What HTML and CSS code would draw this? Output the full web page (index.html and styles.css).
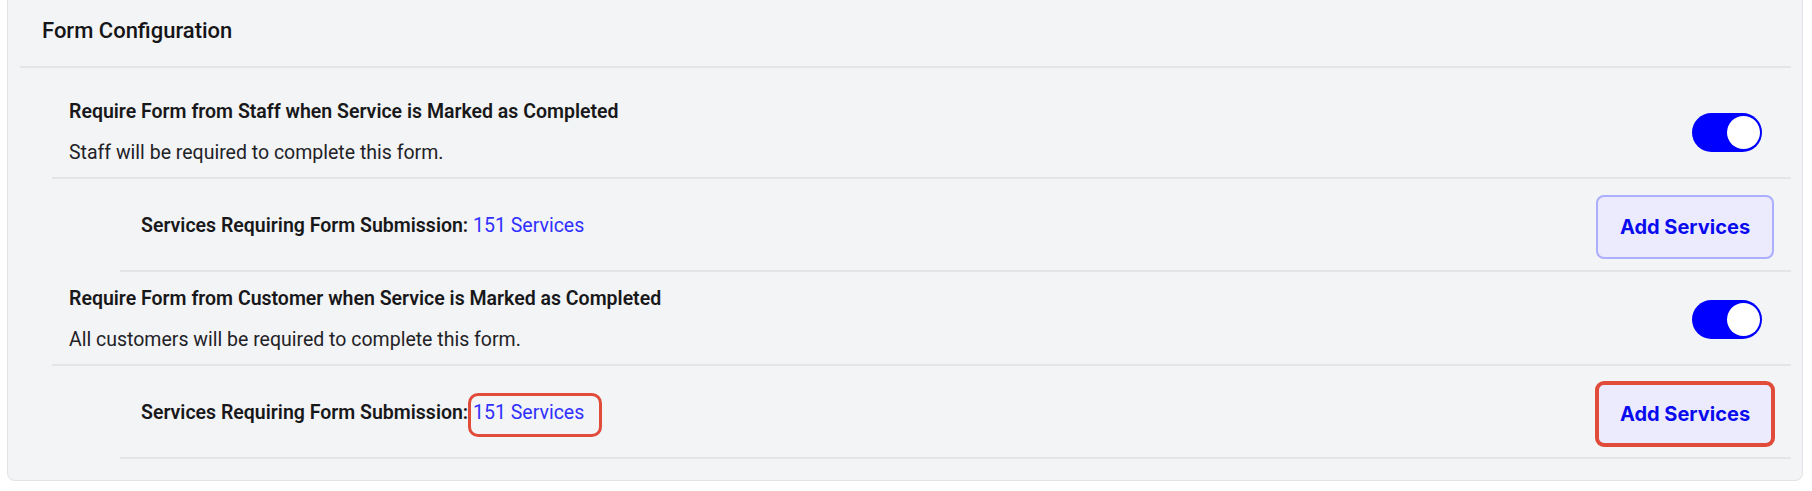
FILE: index.html
```html
<!DOCTYPE html>
<html lang="en">
<head>
<meta charset="utf-8">
<title>Form Configuration</title>
<link rel="stylesheet" href="styles.css">
</head>
<body>
<section class="card">
  <div class="card-header">Form Configuration</div>

  <div class="setting first">
    <div class="toggle-row">
      <div class="toggle-text">
        <div class="title">Require Form from Staff when Service is Marked as Completed</div>
        <div class="desc">Staff will be required to complete this form.</div>
      </div>
      <span class="switch on"><span class="knob"></span></span>
    </div>
    <div class="sub-row">
      <div class="sub-text"><span class="label">Services Requiring Form Submission:</span> <a class="link" href="#">151 Services</a></div>
      <button class="btn" type="button">Add Services</button>
    </div>
  </div>

  <div class="setting">
    <div class="toggle-row">
      <div class="toggle-text">
        <div class="title">Require Form from Customer when Service is Marked as Completed</div>
        <div class="desc">All customers will be required to complete this form.</div>
      </div>
      <span class="switch on"><span class="knob"></span></span>
    </div>
    <div class="sub-row">
      <div class="sub-text"><span class="label">Services Requiring Form Submission:</span> <a class="link marked" href="#">151 Services</a></div>
      <button class="btn highlight" type="button">Add Services</button>
    </div>
  </div>
</section>
</body>
</html>
```

FILE: styles.css
```css
html, body {
  margin: 0;
  padding: 0;
  background: #ffffff;
}

body {
  font-family: Roboto, "Noto Sans", "Liberation Sans", sans-serif;
  color: #1c1c1e;
}

.card {
  margin: 0 9px 0 7px;
  background: #f3f4f6;
  border: 1px solid #e2e3e7;
  border-top: 0;
  border-radius: 0 0 8px 8px;
  padding: 0 11px 21px 12px;
}

.card-header {
  padding: 17px 22px 21px;
  font-size: 22px;
  line-height: 28px;
  font-weight: 500;
  color: #151517;
  border-bottom: 2px solid #e4e5e9;
}

.setting {
  margin-left: 32px;
}

.setting.first {
  margin-top: 17px;
}

.toggle-row {
  display: flex;
  align-items: center;
  justify-content: space-between;
  padding: 13px 29px 10px 17px;
  border-bottom: 2px solid #e4e5e9;
}

.title {
  font-size: 19.5px;
  line-height: 28px;
  font-weight: 600;
  color: #18181a;
}

.desc {
  margin-top: 13px;
  font-size: 19.5px;
  line-height: 28px;
  font-weight: 400;
  color: #222226;
}

.switch {
  position: relative;
  display: inline-block;
  width: 70px;
  height: 39px;
  border-radius: 20px;
  background: #0000ff;
  flex-shrink: 0;
}

.knob {
  position: absolute;
  top: 3px;
  right: 2px;
  width: 33px;
  height: 33px;
  border-radius: 50%;
  background: #ffffff;
}

.sub-row {
  display: flex;
  align-items: center;
  justify-content: space-between;
  margin-left: 68px;
  padding: 16px 17px 11px 21px;
  border-bottom: 2px solid #e4e5e9;
}

.sub-text {
  font-size: 19.5px;
  line-height: 28px;
  padding-bottom: 3px;
}

.label {
  font-weight: 600;
  color: #18181a;
}

.link {
  position: relative;
  color: #2f2fff;
  text-decoration: none;
}

.link.marked::after {
  content: "";
  position: absolute;
  top: -8px;
  bottom: -13px;
  left: -5px;
  right: -18px;
  border: 3px solid #e04b3a;
  border-radius: 10px;
}

.btn {
  width: 178px;
  height: 64px;
  padding: 0;
  border: 2px solid #acaeff;
  border-radius: 8px;
  background: #ebebfd;
  color: #0a0aee;
  font-family: Inter, "Noto Sans", sans-serif;
  font-size: 20px;
  font-weight: 700;
  cursor: pointer;
}

.btn.highlight {
  border: 3px solid #e04b3a;
  box-shadow: 0 0 0 1px #e04b3a;
}
```
